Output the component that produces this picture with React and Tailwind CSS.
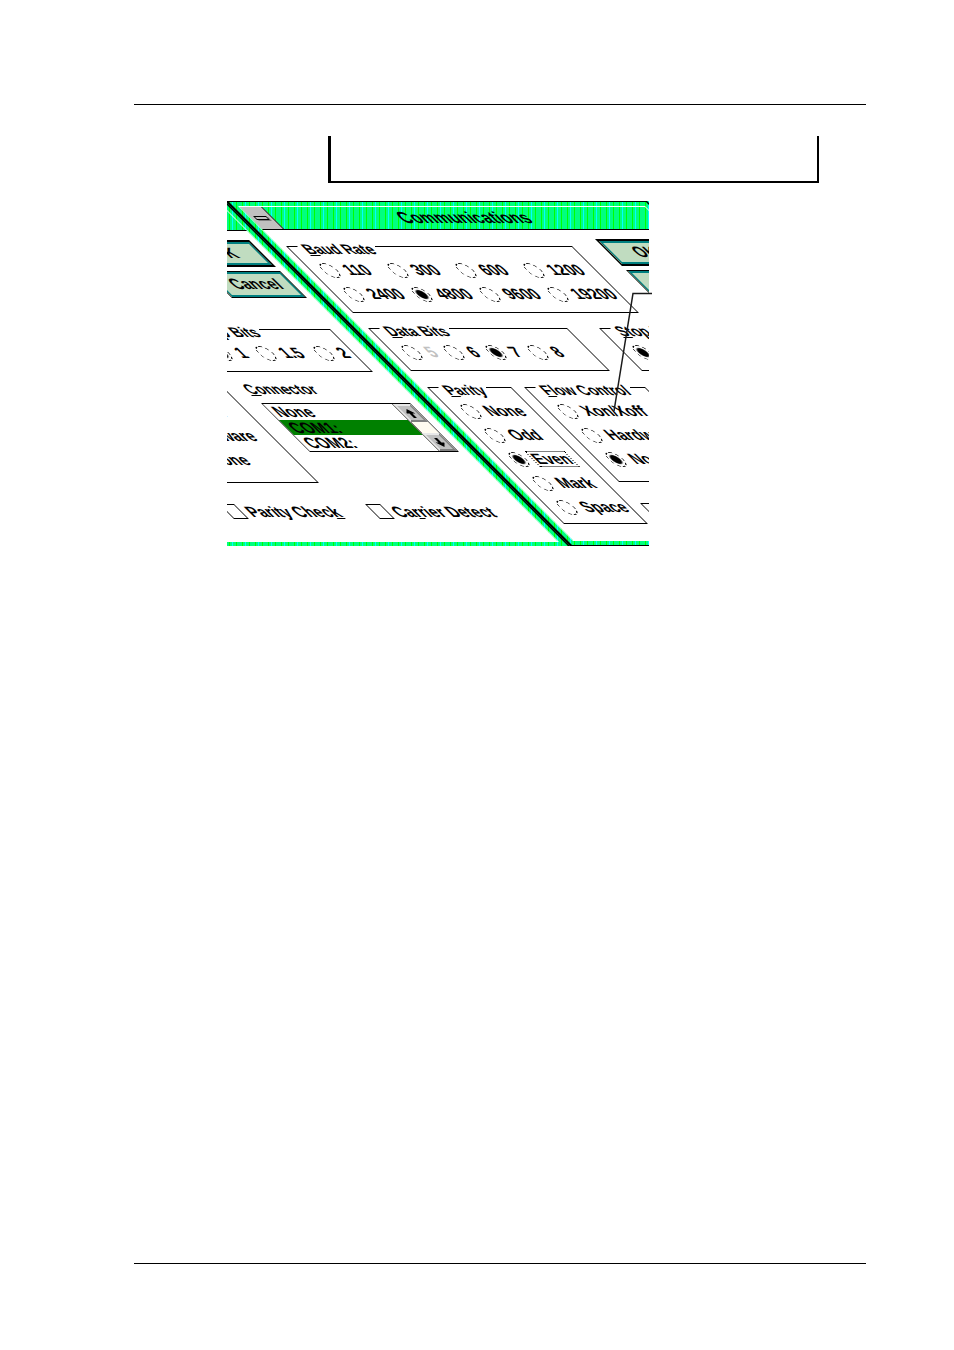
import React, { useId, useState } from 'react';

const baudRates = ['110', '300', '600', '1200', '2400', '4800', '9600', '19200'];
const ports = ['None', 'COM1:', 'COM2:'];

//group box with the caption sitting on the top line
const Group = ({ hotkey, title, className, children }) => (
  <fieldset className={`border border-black pl-[11px] pt-[2px] ${className}`}>
    <legend className="-ml-px bg-white px-1 pt-[6px] text-[14px] leading-[14px] whitespace-nowrap">
      <span className="underline">{hotkey}</span>{title}
    </legend>
    {children}
  </fieldset>
);

const Radio = ({ name, label, checked, disabled, focused, className }) => (
  <label className={`flex h-6 items-center gap-[6px] whitespace-nowrap ${disabled ? 'text-[#c0c0c0]' : ''} ${className || ''}`}>
    <input
      type="radio"
      name={name}
      defaultChecked={checked}
      disabled={disabled}
      className="size-[15px] shrink-0 appearance-none rounded-full border border-dashed border-black checked:bg-[radial-gradient(circle,#000_0_4px,transparent_5px)]"
    />
    <span className={`border border-dotted px-px leading-[14px] ${focused ? 'border-black' : 'border-transparent'}`}>
      {label}
    </span>
  </label>
);

const Check = ({ before, hotkey, after, className }) => (
  <label className={`flex items-center gap-[6px] whitespace-nowrap ${className || ''}`}>
    <input type="checkbox" className="size-[15px] shrink-0 appearance-none border border-black bg-white checked:bg-black" />
    <span>{before}<span className="underline">{hotkey}</span>{after}</span>
  </label>
);

const ScrollButton = ({ label, flip }) => (
  <button aria-label={label} className="flex h-[18px] w-full items-center justify-center border-2 border-t-[#e8e8e8] border-l-[#e8e8e8] border-r-[#808080] border-b-[#808080] bg-[#c0c0c0]">
    <svg viewBox="0 0 9 9" className={`size-[9px] ${flip ? 'rotate-180' : ''}`} fill="#000">
      <path d="M4.5 0 9 4.5H6V9H3V4.5H0Z" />
    </svg>
  </button>
);

const Dialog = ({ className }) => {
  const id = useId();
  const [port, setPort] = useState('COM1:');

  return (
    <div className={`w-[422px] shrink-0 border-y border-r-2 border-l-3 border-black px-[5px] py-1 ${className}`}>
      <div className="border border-white">
        {/* Title bar, the stripes show through from the figure */}
        <div className="flex h-[23px] items-stretch border-b border-black">
          <button aria-label="System menu" className="flex w-[22px] items-center justify-center border-r border-black bg-[#c0c0c0]">
            <span className="h-1 w-[13px] border border-black bg-[#c0c0c0] shadow-[1px_1px_0_#808080]"></span>
          </button>
          <h1 className="flex-1 text-center text-[16px] leading-[22px]">Communications</h1>
        </div>

        <div className="bg-white pt-[6px] pb-4 pl-[7px]">
          <div className="flex gap-[30px]">
            <Group hotkey="B" title="aud Rate" className="h-[77px] w-[286px]">
              <div className="flex flex-wrap">
                {baudRates.map((rate) => (
                  <Radio key={rate} name={`${id}baud`} label={rate} checked={rate === '4800'} className="w-[68px]" />
                ))}
              </div>
            </Group>
            <div className="flex flex-col gap-1 pt-[3px]">
              <button className="h-[27px] w-[75px] border-2 border-black bg-[#c0dcc0] inset-ring-2 inset-ring-[#008080]">OK</button>
              <button className="h-[27px] w-[75px] border border-black bg-[#c0dcc0] inset-ring-2 inset-ring-[#008080]">Cancel</button>
            </div>
          </div>

          <div className="mt-[5px] flex gap-8">
            <Group hotkey="D" title="ata Bits" className="h-[53px] w-[199px]">
              <div className="flex">
                <Radio name={`${id}data`} label="5" disabled className="w-[42px]" />
                <Radio name={`${id}data`} label="6" className="w-[42px]" />
                <Radio name={`${id}data`} label="7" checked className="w-[42px]" />
                <Radio name={`${id}data`} label="8" className="w-[42px]" />
              </div>
            </Group>
            <Group hotkey="S" title="top Bits" className="h-[53px] w-[152px]">
              <div className="flex">
                <Radio name={`${id}stop`} label="1" checked className="w-[44px]" />
                <Radio name={`${id}stop`} label="1.5" className="w-[58px]" />
                <Radio name={`${id}stop`} label="2" />
              </div>
            </Group>
          </div>

          <div className="mt-[6px] flex gap-[13px]">
            <Group hotkey="P" title="arity" className="h-[147px] w-[84px]">
              <Radio name={`${id}parity`} label="None" />
              <Radio name={`${id}parity`} label="Odd" />
              <Radio name={`${id}parity`} label="Even" checked focused />
              <Radio name={`${id}parity`} label="Mark" />
              <Radio name={`${id}parity`} label="Space" />
            </Group>

            <div>
              <div className="flex gap-5">
                <Group hotkey="F" title="low Control" className="h-[105px] w-[121px]">
                  <Radio name={`${id}flow`} label="Xon/Xoff" />
                  <Radio name={`${id}flow`} label="Hardware" />
                  <Radio name={`${id}flow`} label="None" checked />
                </Group>
                <div className="pt-1">
                  <p id={`${id}port`} className="text-[14px] leading-[14px]">
                    <span className="underline">C</span>onnector
                  </p>
                  <div className="mt-[7px] ml-[2px] flex h-[49px] w-[149px] border border-black">
                    <ul role="listbox" aria-labelledby={`${id}port`} className="flex flex-1 flex-col">
                      {ports.map((item) => (
                        <li key={item} role="option" aria-selected={item === port} className={`flex-1 ${item === port ? 'bg-[#008000]' : 'bg-white'}`}>
                          <button onClick={() => setPort(item)} className="block w-full pl-1 text-left leading-[15px]">
                            {item}
                          </button>
                        </li>
                      ))}
                    </ul>
                    <div className="flex w-[18px] flex-col justify-between border-l border-black bg-[#fffbf0]">
                      <ScrollButton label="Scroll up" />
                      <ScrollButton label="Scroll down" flip />
                    </div>
                  </div>
                </div>
              </div>
              <div className="mt-[21px] flex leading-[15px]">
                <Check before="Parity Chec" hotkey="k" className="w-[146px]" />
                <Check before="Ca" hotkey="r" after="rier Detect" />
              </div>
            </div>
          </div>
        </div>
      </div>
    </div>
  );
};

const App = () => {
  return (
    <main className="flex min-h-screen flex-col bg-white pt-[104px] pr-[88px] pb-[86px] pl-[134px] font-['Liberation_Sans',sans-serif] text-black">
      <hr className="border-t border-black" />
      <div className="mt-[31px] mr-[47px] ml-[194px] h-[47px] border-r-2 border-b-2 border-l-3 border-black"></div>

      <figure className="relative mt-[18px] ml-[93px] w-[422px]">
        {/* The dialog leans over and wraps round, so it is laid twice side by side */}
        <div className="overflow-hidden bg-[repeating-linear-gradient(90deg,#00ff80_0_2px,#00ff00_2px_3px,#00ff80_3px_5px,#00ffff_5px_6px,#00ff80_6px_9px,#00ff00_9px_10px,#00ff80_10px_13px)]">
          <div className="-ml-[424px] flex h-[345px] w-[848px] origin-top-left skew-x-[45deg] items-start text-[15px] font-bold">
            <Dialog className="mt-px" />
            <Dialog />
          </div>
        </div>
        {/* Callout line */}
        <svg viewBox="0 0 426 345" className="pointer-events-none absolute top-0 left-0 h-[345px] w-[426px]" fill="none" stroke="#1a1a1a" strokeWidth="1.5">
          <path d="M425 92.5H406L387 210" />
        </svg>
      </figure>

      <hr className="mt-auto border-t border-black" />
    </main>
  );
};

export default App;
